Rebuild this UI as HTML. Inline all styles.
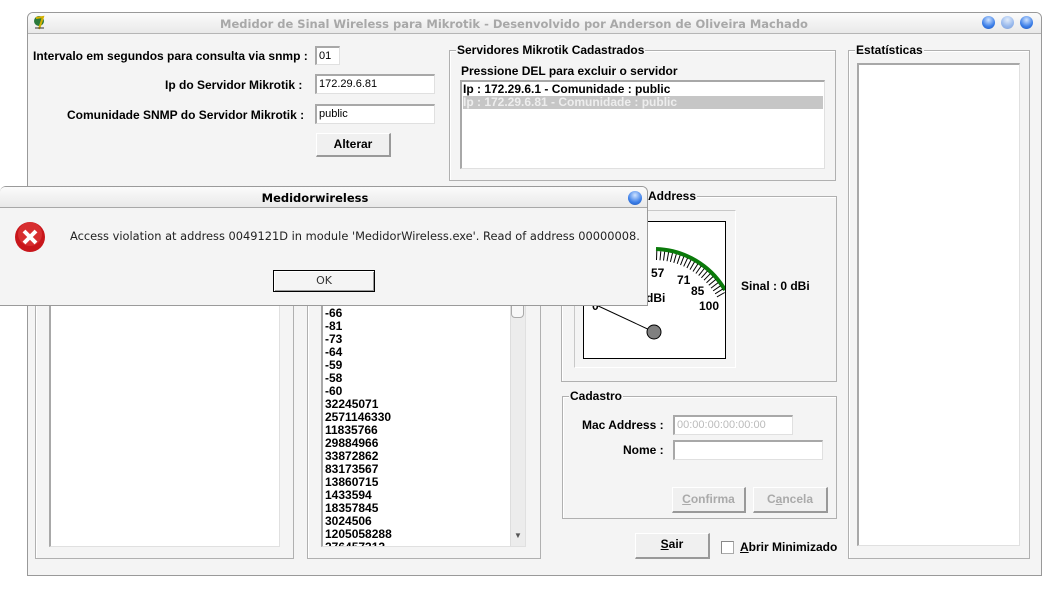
<!DOCTYPE html>
<html><head><meta charset="utf-8"><style>
*{box-sizing:border-box;margin:0;padding:0}
body{width:1042px;height:592px;background:#fff;position:relative;overflow:hidden;font-family:"Liberation Sans",sans-serif;font-size:12px;font-weight:bold;color:#000}
.a{position:absolute}
.win{left:27px;top:12px;width:1015px;height:564px;background:#f4f4f4;border:1px solid #999;border-radius:6px 6px 0 0}
.tb{left:28px;top:13px;width:1013px;height:21px;background:linear-gradient(#fbfbfb,#e9e9e9);border-bottom:1px solid #b5b5b5;border-radius:5px 5px 0 0}
.grp{border:1px solid #b0b0b0;box-shadow:inset 1px 1px 0 #fff}
.lg{position:absolute;top:-8px;left:7px;background:#f4f4f4;padding:0 1px;font-size:12px}
.in{background:#fff;border-top:2px solid #a8a8a8;border-left:2px solid #a8a8a8;border-right:1px solid #e0e0e0;border-bottom:1px solid #e0e0e0;font-weight:normal;font-size:11px;padding:2px 2px}
.btn{background:#f0f0f0;border-top:1px solid #fff;border-left:1px solid #fff;border-right:2px solid #999;border-bottom:2px solid #999;text-align:center}
.orb{width:13px;height:13px;border-radius:50%;background:radial-gradient(circle at 50% 30%,#cfe3ff,#3b7ee8 60%,#1f56b8);top:16px}
.lst div{line-height:13px}
</style></head><body>
<div class="a win"></div>
<div class="a tb"></div>
<div class="a" style="left:33px;top:14px;width:13px;height:16px;"><svg width="13" height="16"><circle cx="6" cy="7" r="5" fill="#2a7a3a"/><path d="M3 4 L10 3 L6 15" stroke="#d4b000" stroke-width="2" fill="none"/><path d="M2 14h9" stroke="#333"/></svg></div>
<div class="a" style="left:0;width:1028px;top:17px;text-align:center;color:#a8a8a8;font-family:'DejaVu Sans',sans-serif;font-size:11.5px">Medidor de Sinal Wireless para Mikrotik - Desenvolvido por Anderson de Oliveira Machado</div>
<div class="a orb" style="left:982px"></div><div class="a orb" style="left:1001px;opacity:.5"></div><div class="a orb" style="left:1020px"></div>

<div class="a" style="left:33px;top:49px">Intervalo em segundos para consulta via snmp :</div>
<div class="a in" style="left:315px;top:46px;width:25px;height:19px">01</div>
<div class="a" style="left:165px;top:78px">Ip do Servidor Mikrotik :</div>
<div class="a in" style="left:315px;top:74px;width:120px;height:20px">172.29.6.81</div>
<div class="a" style="left:67px;top:108px">Comunidade SNMP do Servidor Mikrotik :</div>
<div class="a in" style="left:315px;top:104px;width:120px;height:20px">public</div>
<div class="a btn" style="left:316px;top:133px;width:75px;height:24px;line-height:21px">Alterar</div>

<div class="a grp" style="left:449px;top:50px;width:387px;height:131px"><span class="lg" style="left:6px">Servidores Mikrotik Cadastrados</span></div>
<div class="a" style="left:461px;top:64px">Pressione DEL para excluir o servidor</div>
<div class="a in lst" style="left:460px;top:80px;width:365px;height:89px;font-weight:bold;font-size:12px;padding:1px 1px"><div>Ip : 172.29.6.1 - Comunidade : public</div><div style="background:#c6c6c6;color:#eee">Ip : 172.29.6.81 - Comunidade : public</div></div>

<div class="a grp" style="left:848px;top:50px;width:182px;height:509px"><span class="lg" style="left:6px">Estatísticas</span></div>
<div class="a in" style="left:857px;top:63px;width:163px;height:483px"></div>

<div class="a grp" style="left:35px;top:200px;width:259px;height:359px"></div>
<div class="a in" style="left:49px;top:200px;width:231px;height:347px"></div>
<div class="a grp" style="left:307px;top:200px;width:234px;height:359px"></div>
<div class="a in lst" style="left:321px;top:200px;width:205px;height:347px;font-size:12px;font-weight:bold;padding:0 2px;overflow:hidden;line-height:13px">
<div style="height:105px"></div><div>-66</div><div>-81</div><div>-73</div><div>-64</div><div>-59</div><div>-58</div><div>-60</div><div>32245071</div><div>2571146330</div><div>11835766</div><div>29884966</div><div>33872862</div><div>83173567</div><div>13860715</div><div>1433594</div><div>18357845</div><div>3024506</div><div>1205058288</div><div>276457312</div></div>
<div class="a" style="left:510px;top:300px;width:15px;height:246px;background:#ececec;border-left:1px solid #ddd"></div>
<div class="a" style="left:511px;top:300px;width:13px;height:18px;background:#f8f8f8;border:1px solid #aaa;border-radius:0 0 4px 4px"></div>
<div class="a" style="left:514px;top:531px;font-size:8px;color:#555">▼</div>

<div class="a grp" style="left:561px;top:196px;width:276px;height:186px"></div>
<div class="a" style="left:647px;top:189px;background:#f4f4f4;padding:0 1px">Address</div>
<div class="a" style="left:574px;top:210px;width:162px;height:158px;border:1px solid #c8c8c8;border-right-color:#fff;border-bottom-color:#fff"></div>
<div class="a" style="left:583px;top:221px;width:143px;height:138px;background:#fff;border:1px solid #000">
<svg width="141" height="136" style="position:absolute;left:0;top:0">
<path d="M72 27 A83 83 0 0 1 141 68" stroke="#0a7a0a" stroke-width="4" fill="none"/>
<g id="t" stroke="#000" stroke-width="1"></g>
<path d="M10 82 L70 110" stroke="#000"/>
<circle cx="70" cy="110" r="7" fill="#808080" stroke="#000"/>
<g font-family="Liberation Sans" font-weight="bold" font-size="12">
<text x="57" y="55">2 57</text>
<text x="93" y="62">71</text>
<text x="107" y="73">85</text>
<text x="115" y="88">100</text>
<text x="62" y="80">dBi</text>
<text x="8" y="88">0</text></g>
</svg></div>
<script>
(function(){var g=document.getElementById('t'),s='';for(var i=0;i<22;i++){var a=(-88+i*2.8)*Math.PI/180,c=Math.cos(a),n=Math.sin(a);s+='<line x1="'+(70+c*72).toFixed(1)+'" y1="'+(110+n*72).toFixed(1)+'" x2="'+(70+c*81).toFixed(1)+'" y2="'+(110+n*81).toFixed(1)+'"/>';}g.innerHTML=s;})();
</script>
<div class="a" style="left:741px;top:279px;font-size:12px">Sinal : 0 dBi</div>

<div class="a grp" style="left:562px;top:396px;width:275px;height:123px"><span class="lg" style="left:6px">Cadastro</span></div>
<div class="a" style="left:582px;top:418px;font-size:12px">Mac Address :</div>
<div class="a in" style="left:673px;top:415px;width:120px;height:20px;color:#bbb">00:00:00:00:00:00</div>
<div class="a" style="left:623px;top:443px;font-size:12px">Nome :</div>
<div class="a in" style="left:673px;top:440px;width:150px;height:20px"></div>
<div class="a btn" style="left:672px;top:487px;width:74px;height:26px;line-height:23px;color:#aaa"><u>C</u>onfirma</div>
<div class="a btn" style="left:753px;top:487px;width:75px;height:26px;line-height:23px;color:#aaa">C<u>a</u>ncela</div>
<div class="a btn" style="left:635px;top:533px;width:75px;height:26px;line-height:21px;font-size:12px"><u>S</u>air</div>
<div class="a" style="left:721px;top:541px;width:13px;height:13px;background:#fff;border:1px solid #aaa;border-top-color:#888;border-left-color:#888"></div>
<div class="a" style="left:740px;top:540px;font-size:12px"><u>A</u>brir Minimizado</div>

<!-- dialog -->
<div class="a" style="left:0;top:186px;width:648px;height:120px;background:#f4f4f4;border:1px solid #9a9a9a;border-radius:6px 6px 0 0;border-left:none"></div>
<div class="a" style="left:0;top:187px;width:647px;height:21px;background:linear-gradient(#fbfbfb,#e9e9e9);border-bottom:1px solid #a8a8a8;border-radius:5px 5px 0 0"></div>
<div class="a" style="left:0;width:630px;top:191px;text-align:center;font-family:'DejaVu Sans',sans-serif;font-size:11.5px">Medidorwireless</div>
<div class="a orb" style="left:628px;top:191px;width:14px;height:14px"></div>
<div class="a" style="left:14px;top:221px"><svg width="32" height="32"><circle cx="16" cy="16" r="15" fill="#c8161b"/><circle cx="16" cy="13" r="12" fill="#e54545" opacity=".5"/><path d="M10 10L22 22M22 10L10 22" stroke="#fff" stroke-width="4"/></svg></div>
<div class="a" style="left:70px;top:229px;font-family:'DejaVu Sans',sans-serif;font-weight:normal;font-size:11.4px;color:#222;white-space:nowrap">Access violation at address 0049121D in module 'MedidorWireless.exe'. Read of address 00000008.</div>
<div class="a" style="left:273px;top:270px;width:102px;height:22px;border:1px solid #000;background:#f4f4f4;box-shadow:inset 1px 1px 0 #fff,inset -1px -1px 0 #999;text-align:center;line-height:20px;font-family:'DejaVu Sans',sans-serif;font-weight:normal;font-size:11px;color:#333">OK</div>
</body></html>
